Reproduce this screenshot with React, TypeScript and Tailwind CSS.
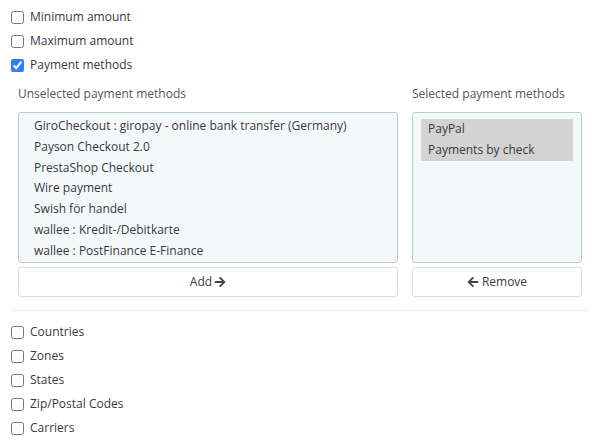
import { FaArrowLeft, FaArrowRight } from "react-icons/fa"

const topChecks = [
  { label: "Minimum amount", checked: false },
  { label: "Maximum amount", checked: false },
  { label: "Payment methods", checked: true },
]

const bottomChecks = ["Countries", "Zones", "States", "Zip/Postal Codes", "Carriers"]

const unselected = [
  "GiroCheckout : giropay - online bank transfer (Germany)",
  "Payson Checkout 2.0",
  "PrestaShop Checkout",
  "Wire payment",
  "Swish för handel",
  "wallee : Kredit-/Debitkarte",
  "wallee : PostFinance E-Finance",
  "wallee : PostFinance Card",
]

const selected = ["PayPal", "Payments by check"]

function CheckRow({ label, checked }: { label: string; checked?: boolean }) {
  return (
    <label className="flex h-6 items-center gap-[6px]">
      <input
        type="checkbox"
        defaultChecked={checked}
        className="m-0 h-[13px] w-[13px] accent-[#2d7ff9]"
      />
      <span className="text-[12px] text-[#363a41]">{label}</span>
    </label>
  )
}

export default function App() {
  return (
    <div className="w-[596px] bg-white pl-[11px] pr-[7px] pt-[5px] font-['Open_Sans',sans-serif]">
      <div className="flex flex-col">
        {topChecks.map((c) => (
          <CheckRow key={c.label} label={c.label} checked={c.checked} />
        ))}
      </div>

      <div className="mt-[8px] flex gap-[14px] pl-[7px] pr-[7px]">
        <div className="flex w-[380px] flex-col">
          <p className="text-[12px] leading-[18px] text-[#555]">Unselected payment methods</p>
          <div className="mt-[9px] h-[151px] overflow-hidden rounded-[3px] border border-[#bbcdd2] bg-[#f5f8f9] px-[8px] py-[6px]">
            <div className="-mt-[3px]">
              {unselected.map((m) => (
                <div key={m} className="h-[20.8px] px-[7px] text-[12px] leading-[20.8px] text-[#363a41]">
                  {m}
                </div>
              ))}
            </div>
          </div>
          <button className="mt-[4px] flex h-[30px] items-center justify-center gap-[2px] rounded-[3px] border border-[#dcdcdc] bg-white text-[12px] text-[#363a41]">
            Add
            <FaArrowRight className="h-[12px] w-[12px] text-[#444]" />
          </button>
        </div>

        <div className="flex w-[170px] flex-col">
          <p className="text-[12px] leading-[18px] text-[#555]">Selected payment methods</p>
          <div className="mt-[9px] h-[151px] overflow-hidden rounded-[3px] border border-[#bbcdd2] bg-[#f5f8f9] px-[8px] py-[6px]">
            <div className="bg-[#d3d3d3]">
              {selected.map((m) => (
                <div key={m} className="h-[20.8px] px-[7px] text-[12px] leading-[20.8px] text-[#363a41]">
                  {m}
                </div>
              ))}
            </div>
          </div>
          <button className="mt-[4px] flex h-[30px] items-center justify-center gap-[3px] rounded-[3px] border border-[#dcdcdc] bg-white text-[12px] text-[#363a41]">
            <FaArrowLeft className="h-[12px] w-[12px] text-[#444]" />
            Remove
          </button>
        </div>
      </div>

      <div className="mt-[13px] border-t border-[#eeeeee]" />

      <div className="mt-[9px] flex flex-col">
        {bottomChecks.map((c) => (
          <CheckRow key={c} label={c} />
        ))}
      </div>
    </div>
  )
}
